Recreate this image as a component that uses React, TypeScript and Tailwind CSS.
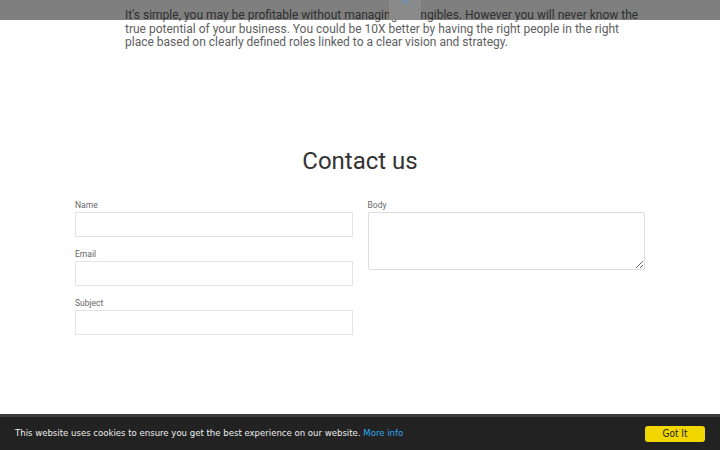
export default function App() {
  return (
    <div className="relative h-[450px] w-[720px] overflow-hidden bg-white" style={{ fontFamily: "Roboto, sans-serif" }}>
      <div className="pt-[9px] pl-[125px]">
        <p className="w-[522px] text-[12px] leading-[13.5px] text-[#606060]">
          It's simple, you may be profitable without managing intangibles. However you will never know the true potential of your business. You could be 10X better by having the right people in the right place based on clearly defined roles linked to a clear vision and strategy.
        </p>
      </div>

      <h2 className="mt-[97px] text-center text-[24px] leading-[28px] text-[#333]">Contact us</h2>

      <form className="mx-auto mt-[25px] grid w-[570px] grid-cols-2 gap-x-[15px]">
        <div className="flex flex-col gap-[12px]">
          {["Name", "Email", "Subject"].map((label) => (
            <label key={label} className="flex flex-col">
              <span className="text-[8.5px] leading-[11px] text-[#666]">{label}</span>
              <input className="mt-[1px] h-[25px] w-full border border-[#e3e3e3] bg-white" />
            </label>
          ))}
        </div>
        <label className="flex flex-col">
          <span className="text-[8.5px] leading-[11px] text-[#666]">Body</span>
          <textarea className="mt-[1px] h-[58px] w-full resize-y rounded-[2px] border border-[#dcdcdc] bg-white" />
        </label>
      </form>

      {/* top overlay */}
      <div className="absolute left-0 top-0 h-[20px] w-full bg-black/50">
        <div className="absolute left-[389px] top-0 flex h-[20px] w-[32px] justify-center bg-[#8a8a8a]">
          <div className="h-[4px] w-[7px] bg-[#7890a2]" />
        </div>
      </div>

      {/* cookie bar */}
      <div
        className="absolute bottom-0 left-0 flex h-[36px] w-full items-center justify-between border-t-[3px] border-[#3c3c3c] bg-[#222] pl-[15px] pr-[15px]"
        style={{ fontFamily: "'DejaVu Sans Condensed', 'DejaVu Sans', sans-serif" }}
      >
        <span className="text-[9.5px] text-[#eee]">
          This website uses cookies to ensure you get the best experience on our website.{" "}
          <a className="text-[#31a8f0]">More info</a>
        </span>
        <button className="h-[16px] w-[60px] rounded-[3px] bg-[#f1d600] text-[10px] text-[#222]">Got It</button>
      </div>
    </div>
  );
}
